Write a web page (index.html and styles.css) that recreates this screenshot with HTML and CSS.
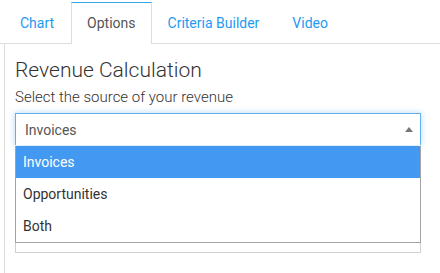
FILE: index.html
```html
<!DOCTYPE html>
<html lang="en">
<head>
    <meta charset="UTF-8">
    <meta name="viewport" content="width=device-width, initial-scale=1.0">
    <title>Revenue Calculation</title>
    <link rel="stylesheet" href="styles.css">
</head>
<body>
    <ul class="tabs">
        <li class="tab">Chart</li>
        <li class="tab active">Options</li>
        <li class="tab">Criteria Builder</li>
        <li class="tab">Video</li>
    </ul>

    <div class="panel">
        <h2 class="title">Revenue Calculation</h2>
        <p class="label">Select the source of your revenue</p>

        <div class="field">
            <div class="select open">
                <span>Invoices</span>
                <span class="arrow"></span>
            </div>
            <!-- lista aberta por cima do resto -->
            <ul class="dropdown">
                <li class="selected">Invoices</li>
                <li>Opportunities</li>
                <li>Both</li>
            </ul>
            <div class="next-box"></div>
        </div>
    </div>
</body>
</html>
```

FILE: styles.css
```css
body {
    margin: 0;
    font-family: Roboto, "Liberation Sans", sans-serif;
    background-color: #fff;
    color: #333;
}
.tabs {
    display: flex;
    list-style: none;
    margin: 0;
    padding: 2px 0 0 4px;
    border-bottom: 1px solid #ddd;
}
.tab {
    height: 40px;
    line-height: 40px;
    padding: 0 16px 0 15px;
    font-size: 14px;
    color: #1e9af2;
    border: 1px solid transparent;
    border-bottom: none;
    margin-bottom: -1px;
}
.tab.active {
    color: #555;
    background-color: #fff;
    border-color: #ddd;
    border-top-color: #3aa6ee;
    height: 41px;
    padding: 0 15px;
}
.panel {
    margin-left: 4px;
    border-left: 1px solid #ddd;
    padding: 14px 19px 0 10px;
    height: 215px;
}
.title {
    margin: 0;
    font-size: 21px;
    line-height: 24px;
    font-weight: 300;
    color: #333;
}
.label {
    margin: 5px 0 6px;
    font-size: 15px;
    line-height: 20px;
    font-weight: 300;
    color: #333;
}
.field {
    position: relative;
}
.select {
    display: flex;
    align-items: center;
    justify-content: space-between;
    height: 31px;
    padding: 0 7px 0 9px;
    border: 1px solid #66afe9;
    border-bottom: none;
    box-shadow: 0 0 6px rgba(102, 175, 233, 0.5);
    font-size: 14px;
    color: #555;
    background-color: #fff;
    position: relative;
    z-index: 1;
}
.arrow {
    width: 0;
    height: 0;
    border-left: 4px solid transparent;
    border-right: 4px solid transparent;
    border-bottom: 5px solid #777;
}
.dropdown {
    position: absolute;
    top: 33px;
    left: 0;
    right: 0;
    margin: 0;
    padding: 0;
    list-style: none;
    background-color: #fff;
    border: 1px solid #a3a3a3;
    border-top: none;
    z-index: 2;
}
.dropdown li {
    height: 32px;
    line-height: 32px;
    padding-left: 7px;
    font-size: 14px;
    color: #333;
}
.dropdown li.selected {
    background-color: #4399f1;
    color: #fff;
}
.next-box {
    margin-top: 75px;
    height: 32px;
    border: 1px solid #d0d0d0;
    border-top: none;
}
```
